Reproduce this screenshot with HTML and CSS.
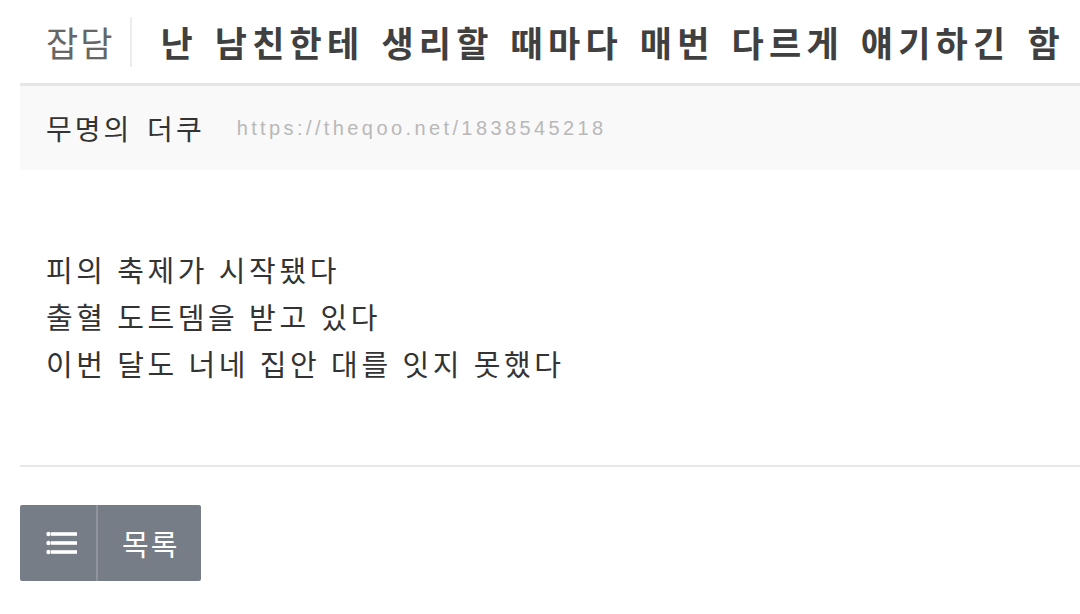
FILE: index.html
```html
<!DOCTYPE html>
<html lang="ko">
<head>
  <meta charset="UTF-8" />
  <title>난 남친한테 생리할 때마다 매번 다르게 얘기하긴 함</title>
  <link rel="stylesheet" href="styles.css">
</head>
<body>
  <div class="post">
    <div class="post-head">
      <span class="category">잡담</span>
      <span class="divider"></span>
      <h1 class="title">난 남친한테 생리할 때마다 매번 다르게 얘기하긴 함</h1>
    </div>

    <div class="meta">
      <span class="author">무명의 더쿠</span>
      <span class="url">https://theqoo.net/1838545218</span>
    </div>

    <div class="content">
      <p>피의 축제가 시작됐다</p>
      <p>출혈 도트뎀을 받고 있다</p>
      <p>이번 달도 너네 집안 대를 잇지 못했다</p>
    </div>

    <div class="actions">
      <a class="list-btn" href="#">
        <span class="list-icon">
          <svg width="32" height="26" viewBox="0 0 32 26">
            <g fill="#fff">
              <circle cx="2.5" cy="4" r="2.2"/>
              <circle cx="2.5" cy="13" r="2.2"/>
              <circle cx="2.5" cy="22" r="2.2"/>
              <rect x="5" y="2.2" width="26" height="3.6"/>
              <rect x="5" y="11.2" width="26" height="3.6"/>
              <rect x="5" y="20.2" width="26" height="3.6"/>
            </g>
          </svg>
        </span>
        <span class="list-text">목록</span>
      </a>
    </div>
  </div>
</body>
</html>
```

FILE: styles.css
```css
body {
  margin: 0;
  background-color: #fff;
  font-family: "Noto Sans CJK KR", "Noto Sans", sans-serif;
  color: #333;
  overflow: hidden;
}

.post {
  margin-left: 20px;
  width: 1100px;
}

.post-head {
  display: flex;
  align-items: center;
  height: 86px;
  padding-left: 26px;
  border-bottom: 3px solid #e6e6e6;
  box-sizing: border-box;
}

.category {
  font-size: 35px;
  color: #666;
  letter-spacing: 2px;
}

.divider {
  width: 2px;
  height: 50px;
  background-color: #ececec;
  margin: 0 28px 0 16px;
}

.title {
  margin: 0;
  font-size: 35px;
  font-weight: bold;
  color: #404040;
  letter-spacing: 5.2px;
  word-spacing: 2px;
  white-space: nowrap;
}

.meta {
  display: flex;
  align-items: center;
  height: 84px;
  padding-left: 26px;
  background-color: #f9f9f9;
}

.author {
  font-size: 28px;
  color: #333;
  letter-spacing: 3px;
  word-spacing: 4px;
}

.url {
  margin-left: 32px;
  font-family: "Liberation Sans", Arial, sans-serif;
  font-size: 20px;
  color: #b8b8b8;
  letter-spacing: 3.4px;
}

.content {
  padding: 76px 0 78px 26px;
  border-bottom: 2px solid #e8e8e8;
}

.content p {
  margin: 0;
  font-size: 29px;
  line-height: 47px;
  color: #333;
  letter-spacing: 3.6px;
  word-spacing: -1px;
}

.actions {
  padding-top: 38px;
}

.list-btn {
  display: inline-flex;
  height: 76px;
  background-color: #777d86;
  text-decoration: none;
  border-radius: 2px;
}

.list-icon {
  display: flex;
  align-items: center;
  width: 78px;
  padding-left: 26px;
  box-sizing: border-box;
  border-right: 2px solid #8f949b;
}

.list-text {
  display: flex;
  align-items: center;
  padding: 0 22px 0 24px;
  font-size: 29px;
  color: #fff;
  letter-spacing: 2px;
}
```
